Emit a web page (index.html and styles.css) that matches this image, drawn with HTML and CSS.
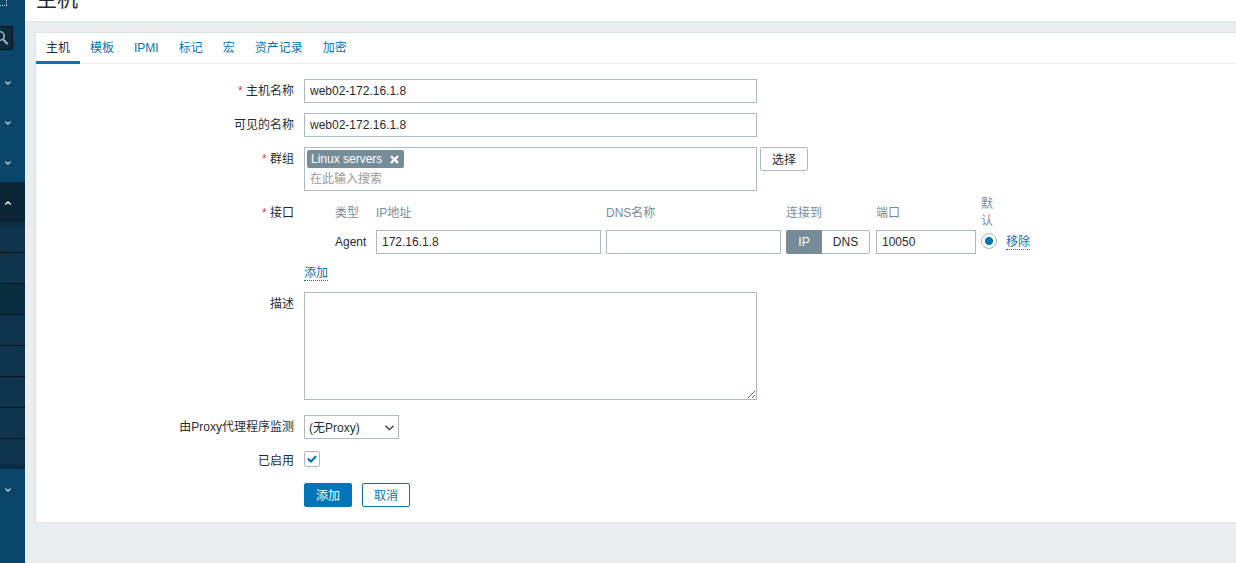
FILE: index.html
```html
<!DOCTYPE html>
<html lang="zh-CN">
  <head>
    <meta charset="UTF-8" />
    <meta name="viewport" content="width=device-width, initial-scale=1.0" />
    <title>主机</title>
    <link rel="stylesheet" href="styles.css">
  </head>
  <body>
    <aside class="sidebar">
      <div class="sidebar-top">
        <svg width="7" height="6" viewBox="0 0 7 6" shape-rendering="crispEdges">
          <path d="M6.5 0v6M0 5.5h7" fill="none" stroke="#c3d5df" stroke-dasharray="1 1" />
        </svg>
      </div>
      <div class="search">
        <svg width="12" height="22" viewBox="0 0 12 22">
          <circle cx="0" cy="9" r="4.2" fill="none" stroke="#9fb3be" stroke-width="1.6" />
          <path d="M3 12.200l4.700 5" stroke="#9fb3be" stroke-width="2" />
        </svg>
      </div>
      <nav class="menu">
        <div class="menu-item"><svg class="chevron" viewBox="0 0 6 4"><path d="M.3 .6L3 3L5.700 .6" /></svg></div>
        <div class="menu-item"><svg class="chevron" viewBox="0 0 6 4"><path d="M.3 .6L3 3L5.700 .6" /></svg></div>
        <div class="menu-item"><svg class="chevron" viewBox="0 0 6 4"><path d="M.3 .6L3 3L5.700 .6" /></svg></div>
        <div class="menu-item open"><svg class="chevron" viewBox="0 0 6 4"><path d="M.3 3.400L3 1L5.700 3.400" /></svg></div>
        <ul class="submenu">
          <li></li>
          <li></li>
          <li class="selected"></li>
          <li></li>
          <li></li>
          <li></li>
          <li></li>
          <li></li>
        </ul>
        <div class="menu-item"><svg class="chevron" viewBox="0 0 6 4"><path d="M.3 .6L3 3L5.700 .6" /></svg></div>
      </nav>
    </aside>

    <div class="wrapper">
      <header class="page-header">
        <h1>主机</h1>
      </header>
      <main class="panel">
        <nav class="tabs">
          <a class="active">主机</a>
          <a>模板</a>
          <a>IPMI</a>
          <a>标记</a>
          <a>宏</a>
          <a>资产记录</a>
          <a>加密</a>
        </nav>

        <form class="host-form">
          <div class="row">
            <label class="required">主机名称</label>
            <input class="field wide" type="text" value="web02-172.16.1.8" spellcheck="false" />
          </div>
          <div class="row">
            <label>可见的名称</label>
            <input class="field wide" type="text" value="web02-172.16.1.8" spellcheck="false" />
          </div>
          <div class="row row-groups">
            <label class="required">群组</label>
            <div class="multiselect">
              <span class="tag">Linux servers
                <svg width="9" height="9" viewBox="0 0 9 9"><path d="M1 1l7 7M8 1l-7 7" stroke="#fff" stroke-width="2.400" /></svg>
              </span>
              <span class="placeholder">在此输入搜索</span>
            </div>
            <button class="btn btn-grey" type="button">选择</button>
          </div>
          <div class="row row-interfaces">
            <label class="required">接口</label>
            <div>
              <div class="interfaces">
                <span class="head">类型</span>
                <span class="head">IP地址</span>
                <span class="head">DNS名称</span>
                <span class="head">连接到</span>
                <span class="head">端口</span>
                <span class="head default">默认</span>
                <span></span>

                <span>Agent</span>
                <input class="field" type="text" value="172.16.1.8" />
                <input class="field" type="text" />
                <div class="toggle"><span class="on">IP</span><span>DNS</span></div>
                <input class="field" type="text" value="10050" />
                <span class="radio"></span>
                <span class="remove"><a class="link">移除</a></span>
              </div>
              <div class="add"><a class="link">添加</a></div>
            </div>
          </div>
          <div class="row row-description">
            <label>描述</label>
            <textarea class="field wide"></textarea>
          </div>
          <div class="row row-proxy">
            <label>由Proxy代理程序监测</label>
            <div class="select">
              <span>(无Proxy)</span>
              <svg width="9" height="6" viewBox="0 0 9 6"><path d="M.5 .7L4.500 4.700L8.500 .7" fill="none" stroke="#333" stroke-width="1.300" /></svg>
            </div>
          </div>
          <div class="row row-enabled">
            <label>已启用</label>
            <span class="checkbox">
              <svg width="10" height="8" viewBox="0 0 10 8"><path d="M.9 3.600L3.900 6.500L9.100 1.200" fill="none" stroke="#0275b8" stroke-width="2.200" /></svg>
            </span>
          </div>
          <div class="row row-buttons">
            <button class="btn btn-primary" type="button">添加</button>
            <button class="btn" type="button">取消</button>
          </div>
        </form>
      </main>
    </div>
  </body>
</html>
```
FILE: styles.css
```css
* {
  box-sizing: border-box;
}
body {
  display: flex;
  height: 100vh;
  margin: 0;
  overflow: hidden;
  background-color: #e9edf0;
  color: #1f2c33;
  font-family: "Liberation Sans", "Noto Sans CJK SC", sans-serif;
  font-size: 12px;
  line-height: 18px;
}
svg {
  display: block;
}

/* Sidebar */
.sidebar {
  flex: none;
  width: 25px;
  background-color: #0a466a;
}
.sidebar-top {
  height: 26px;
}
.search {
  width: 13px;
  height: 24px;
  margin-bottom: 12px;
  overflow: hidden;
  background-color: #0e2a3b;
  border: 1px solid #04131d;
  border-left: 0;
  border-radius: 0 2px 2px 0;
}
.menu-item {
  display: flex;
  align-items: center;
  height: 40px;
  padding: 1px 0 0 5px;
}
.menu-item.open {
  background-color: #0a2535;
}
.chevron {
  width: 6px;
  height: 4px;
  overflow: visible;
}
.chevron path {
  fill: none;
  stroke: #b5c9d5;
  stroke-width: 1.4;
}
.open .chevron path {
  stroke: #fff;
}
.submenu {
  height: 247px;
  margin: 0;
  padding: 0;
  list-style: none;
  background: linear-gradient(#0a2a3e, #0f344d 6px, #0f344d 241px, #0a2a3e);
}
.submenu li {
  height: 31px;
  border-bottom: 1px solid #051520;
}
.submenu li:last-child {
  border-bottom: 0;
}
.submenu .selected {
  background-color: #0a2c3f;
}

/* Page */
.wrapper {
  flex: 1;
  min-width: 0;
}
.page-header {
  display: flex;
  align-items: flex-end;
  height: 22px;
  padding: 0 0 10px 11px;
  background-color: #fff;
  border-bottom: 1px solid #dfe4e7;
}
h1 {
  margin: 0;
  font-size: 21px;
  font-weight: normal;
  line-height: 24px;
}
.panel {
  height: 491px;
  margin: 10px 0 0 10px;
  background-color: #fff;
  border: 1px solid #dfe4e7;
  border-right: 0;
}
.tabs {
  display: flex;
  height: 31px;
  border-bottom: 1px solid #ebeef0;
}
.tabs a {
  height: 31px;
  padding: 6px 10px 0;
  color: #0275b8;
}
.tabs .active {
  color: #1f2c33;
  border-bottom: 3px solid #0275b8;
}

/* Form */
.host-form {
  padding-top: 15px;
}
.row {
  display: flex;
  align-items: flex-start;
  margin-bottom: 10px;
}
.row > label {
  flex: none;
  width: 258px;
  margin-right: 10px;
  padding-top: 3px;
  text-align: right;
}
.required::before {
  content: "* ";
  color: #e0364c;
}
.field {
  height: 24px;
  margin: 0;
  padding: 0 5px;
  background-color: #fff;
  border: 1px solid #acbbc2;
  outline: 0;
  color: #1f2c33;
  font: inherit;
}
.wide {
  width: 453px;
}
textarea.field {
  display: block;
  height: 108px;
}
.row-groups {
  margin-bottom: 4px;
}
.multiselect {
  width: 453px;
  height: 44px;
  margin-right: 3px;
  padding: 2px;
  border: 1px solid #acbbc2;
}
.tag {
  display: flex;
  align-items: center;
  justify-content: space-between;
  width: 97px;
  height: 18px;
  padding: 0 5px 0 4px;
  background-color: #768d99;
  border-radius: 2px;
  color: #fff;
}
.placeholder {
  display: block;
  padding: 2px 3px;
  color: #999;
}
.btn {
  width: 48px;
  height: 24px;
  padding: 2px 0 0;
  background-color: #fff;
  border: 1px solid #0275b8;
  border-radius: 2px;
  color: #0275b8;
  font: inherit;
}
.btn-grey {
  border-color: #acbbc2;
  color: #1f2c33;
}
.btn-primary {
  margin-right: 10px;
  background-color: #0275b8;
  color: #fff;
}

.row-interfaces {
  margin-bottom: 11px;
}
.row-interfaces > label {
  padding-top: 9px;
}
.interfaces {
  display: grid;
  grid-template-columns: 36px 225px 175px 85px 100px 16px 30px;
  grid-template-rows: 35px 24px;
  column-gap: 5px;
  align-items: center;
  padding-left: 31px;
}
.head {
  padding-top: 1px;
  color: #768d99;
  line-height: 17px;
}
.default {
  width: 13px;
}
.toggle {
  display: flex;
  width: 84px;
  height: 24px;
  border: 1px solid #acbbc2;
  border-radius: 2px;
  line-height: 22px;
  text-align: center;
}
.toggle span {
  flex: 1;
}
.toggle .on {
  flex: none;
  width: 36px;
  margin: -1px 0 -1px -1px;
  background-color: #768d99;
  border-radius: 2px 0 0 2px;
  color: #fff;
  line-height: 24px;
}
.radio {
  width: 16px;
  height: 16px;
  margin-top: -2px;
  border: 1px solid #acbbc2;
  border-radius: 50%;
  background: radial-gradient(circle, #0275b8 3.7px, #fff 4.3px);
}
.link {
  display: inline-block;
  height: 16px;
  border-bottom: 1px dotted #0275b8;
  color: #0275b8;
  line-height: 16px;
}
.remove {
  display: flex;
  padding-left: 4px;
}
.add {
  display: flex;
  padding-top: 11px;
}

.row-description {
  margin-bottom: 15px;
}
.row-proxy {
  margin-bottom: 12px;
}
.select {
  display: flex;
  align-items: center;
  justify-content: space-between;
  width: 95px;
  height: 24px;
  padding: 1px 4px 0;
  border: 1px solid #acbbc2;
}
.row-enabled {
  height: 16px;
  margin-bottom: 16px;
}
.row-enabled > label {
  padding-top: 1px;
}
.checkbox {
  display: flex;
  align-items: center;
  justify-content: center;
  width: 16px;
  height: 16px;
  border: 1px solid #acbbc2;
  border-radius: 2px;
}
.row-buttons {
  padding-left: 268px;
}
```
